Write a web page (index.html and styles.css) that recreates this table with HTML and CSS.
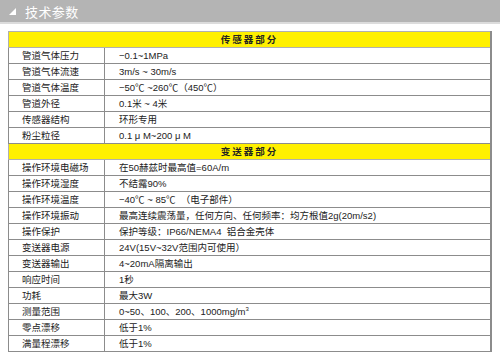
FILE: index.html
```html
<!doctype html>
<html lang="zh-CN">
  <head>
    <meta charset="UTF-8" />
    <title>技术参数</title>
    <link rel="stylesheet" href="styles.css">
  </head>
  <body>
    <!-- Section title -->
    <div class="section-title">
      <svg class="title-mark" width="7" height="7" viewBox="0 0 7 7"><polygon points="7,0 7,7 0,7" fill="#fff"/></svg>
      <span>技术参数</span>
    </div>

    <table class="spec-table">
      <colgroup>
        <col class="col-name" />
        <col />
      </colgroup>
      <tbody>
        <tr class="group-row"><td colspan="2">传感器部分</td></tr>
        <tr><td>管道气体压力</td><td>−0.1~1MPa</td></tr>
        <tr><td>管道气体流速</td><td>3m/s ~ 30m/s</td></tr>
        <tr><td>管道气体温度</td><td>−50℃ ~260℃（450℃）</td></tr>
        <tr><td>管道外径</td><td>0.1米 ~ 4米</td></tr>
        <tr><td>传感器结构</td><td>环形专用</td></tr>
        <tr><td>粉尘粒径</td><td>0.1 μ M~200 μ M</td></tr>

        <tr class="group-row"><td colspan="2">变送器部分</td></tr>
        <tr><td>操作环境电磁场</td><td>在50赫兹时最高值=60A/m</td></tr>
        <tr><td>操作环境湿度</td><td>不结露90%</td></tr>
        <tr><td>操作环境温度</td><td>−40℃ ~ 85℃ &nbsp;（电子部件）</td></tr>
        <tr><td>操作环境振动</td><td>最高连续震荡量，任何方向、任何频率：均方根值2g(20m/s2)</td></tr>
        <tr><td>操作保护</td><td>保护等级：IP66/NEMA4 &nbsp;铝合金壳体</td></tr>
        <tr><td>变送器电源</td><td>24V(15V~32V范围内可使用）</td></tr>
        <tr><td>变送器输出</td><td>4~20mA隔离输出</td></tr>
        <tr><td>响应时间</td><td>1秒</td></tr>
        <tr><td>功耗</td><td>最大3W</td></tr>
        <tr><td>测量范围</td><td>0~50、100、200、1000mg/m<sup>3</sup></td></tr>
        <tr><td>零点漂移</td><td>低于1%</td></tr>
        <tr><td>满量程漂移</td><td>低于1%</td></tr>
      </tbody>
    </table>
  </body>
</html>
```

FILE: styles.css
```css
/* Base */
body {
  margin: 0;
  background: #fff;
  color: #222;
  font-family: "Liberation Sans", "Noto Sans CJK SC", sans-serif;
}

/* Gray section title bar */
.section-title {
  display: flex;
  align-items: center;
  gap: 9px;
  height: 22px;
  padding-left: 9px;
  background: #b4b4b4;
  border-bottom: 2px solid #dcdcdc;
  color: #fff;
  font-size: 13px;
  letter-spacing: 0.4px;
}

.title-mark {
  flex: none;
}

/* Spec table */
.spec-table {
  width: 484px;
  margin: 7px 0 0 8px;
  border-collapse: collapse;
  table-layout: fixed;
  border: 1px solid #8c8c8c;
  border-right-width: 2px;
  font-size: 9.5px;
}

.col-name {
  width: 96px;
}

.spec-table td {
  height: 15px;
  padding: 0 0 0 13px;
  border: 1px solid #8c8c8c;
  line-height: 15px;
  white-space: nowrap;
}

.spec-table td + td {
  padding-left: 14px;
}

.spec-table sup {
  font-size: 6px;
  line-height: 0;
  vertical-align: 4px;
}

/* Yellow group heading rows */
.group-row td {
  padding: 0;
  background: #fff000;
  border-color: #b0b0b0;
  text-align: center;
  font-weight: bold;
  letter-spacing: 2px;
}
```
